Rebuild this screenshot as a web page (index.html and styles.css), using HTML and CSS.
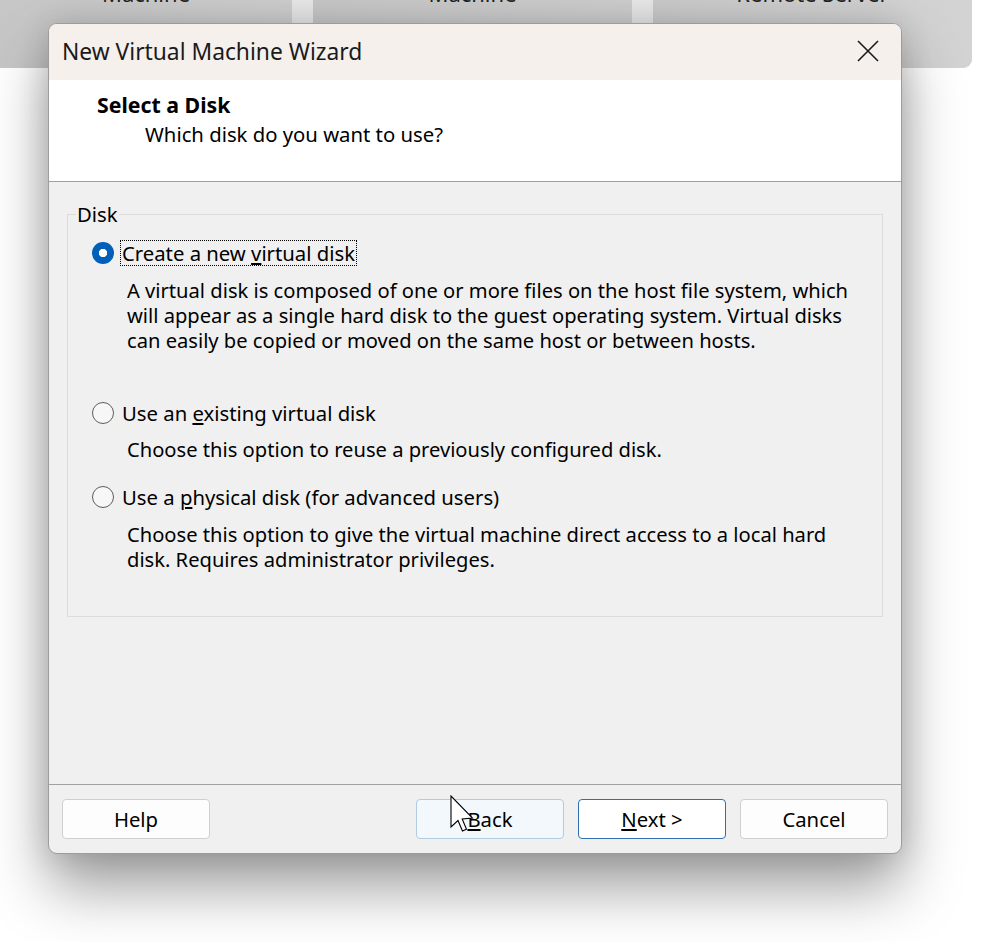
FILE: index.html
```html
<!DOCTYPE html>
<html>
<head>
<meta charset="utf-8">
<link rel="stylesheet" href="styles.css">
</head>
<body>
<div class="screen">
  <div class="cards">
    <div class="card card-a"><span class="card-label">Machine</span></div>
    <div class="card card-b"><span class="card-label">Machine</span></div>
    <div class="card card-c"><span class="card-label">Remote Server</span></div>
  </div>

  <div class="dialog">
    <div class="titlebar">
      <span class="title">New Virtual Machine Wizard</span>
      <svg class="close" width="22" height="22" viewBox="0 0 22 22"><path d="M1 1 L21 21 M21 1 L1 21" stroke="#1a1a1a" stroke-width="1.6" fill="none"/></svg>
    </div>
    <div class="header">
      <div class="h-title">Select a Disk</div>
      <div class="h-sub">Which disk do you want to use?</div>
    </div>
    <div class="body">
      <fieldset class="group">
        <legend class="legend">Disk</legend>
        <div class="option opt1">
          <div class="radio-row">
            <span class="radio checked"></span>
            <span class="label focus">Create a new <u>v</u>irtual disk</span>
          </div>
          <div class="desc">
            <div class="line">A virtual disk is composed of one or more files on the host file system, which</div>
            <div class="line">will appear as a single hard disk to the guest operating system. Virtual disks</div>
            <div class="line">can easily be copied or moved on the same host or between hosts.</div>
          </div>
        </div>
        <div class="option opt2">
          <div class="radio-row">
            <span class="radio"></span>
            <span class="label">Use an <u>e</u>xisting virtual disk</span>
          </div>
          <div class="desc d2">
            <div class="line">Choose this option to reuse a previously configured disk.</div>
          </div>
        </div>
        <div class="option opt3">
          <div class="radio-row">
            <span class="radio"></span>
            <span class="label">Use a <u>p</u>hysical disk (for advanced users)</span>
          </div>
          <div class="desc">
            <div class="line">Choose this option to give the virtual machine direct access to a local hard</div>
            <div class="line">disk. Requires administrator privileges.</div>
          </div>
        </div>
      </fieldset>
    </div>
    <div class="footer">
      <button class="btn">Help</button>
      <div class="spacer"></div>
      <div class="btn-group">
        <button class="btn hover"><u>B</u>ack</button>
        <button class="btn default"><u>N</u>ext &gt;</button>
        <button class="btn">Cancel</button>
      </div>
    </div>
  </div>

  <svg class="cursor" width="26" height="40" viewBox="0 0 26 40">
    <path d="M1 1 L1 32 L8 25.5 L12.5 36 L16.5 34.3 L12.2 24 L22.5 23 Z" fill="#ffffff" stroke="#000000" stroke-width="1.1" stroke-linejoin="miter"/>
  </svg>
</div>
</body>
</html>
```

FILE: styles.css
```css
* { box-sizing: border-box; }
html, body {
  margin: 0;
  padding: 0;
  background: #ffffff;
  overflow: hidden;
}
.screen {
  position: relative;
  width: 997px;
  height: 942px;
  overflow: hidden;
  font-family: "Noto Sans", "Open Sans", sans-serif;
  color: #000;
}
.cards {
  display: flex;
  width: 972px;
  height: 68px;
  gap: 21px;
  background: #e6e6e6;
  border-bottom-right-radius: 9px;
}
.card {
  height: 68px;
  background: linear-gradient(90deg, #c6c6c6, #cdcdcd);
  display: flex;
  justify-content: center;
  font-size: 22px;
  color: #222;
}
.card-a { width: 292px; }
.card-b { width: 319px; }
.card-c { width: 319px; border-bottom-right-radius: 9px; background: linear-gradient(90deg, #c9c9c9, #d3d3d3); }
.card-label {
  margin-top: -21px;
  line-height: 28px;
  height: 28px;
}

.dialog {
  position: absolute;
  left: 48px;
  top: 23px;
  width: 854px;
  height: 831px;
  border: 1px solid #9c9c9c;
  border-radius: 9px;
  background: #f0f0f0;
  overflow: hidden;
  box-shadow: 0 34px 60px rgba(0,0,0,0.38), 0 0 30px rgba(0,0,0,0.15);
  display: flex;
  flex-direction: column;
}
.titlebar {
  height: 56px;
  flex: none;
  background: #f6f0ed;
  display: flex;
  align-items: center;
  padding-left: 13px;
  padding-right: 22px;
}
.title {
  font-size: 22.8px;
  flex: 1;
  color: #1a1a1a;
  margin-top: -1px;
}
.close { margin-top: -2px; }
.header {
  height: 102px;
  flex: none;
  background: #ffffff;
  border-bottom: 1px solid #a0a0a0;
  padding-left: 48px;
  padding-top: 11px;
}
.h-title {
  font-weight: 700;
  font-size: 21.3px;
  line-height: 27px;
}
.h-sub {
  font-size: 20.3px;
  line-height: 27px;
  padding-left: 48px;
  margin-top: 3px;
}
.body {
  flex: 1;
  padding: 21px 18px 0 18px;
}
.group {
  margin: 0;
  border: 1px solid #dcdcdc;
  padding: 0 0 0 24px;
  height: 414px;
}
.legend {
  font-size: 20.3px;
  padding: 0 1px;
  margin-left: -16px;
  line-height: 22px;
}
.opt1 { margin-top: 15px; }
.opt2 { margin-top: 47px; }
.opt3 { margin-top: 22px; }
.radio-row {
  display: flex;
  align-items: center;
  gap: 7px;
  height: 26px;
}
.radio {
  width: 22px;
  height: 22px;
  border-radius: 50%;
  border: 1.3px solid #5d5d5d;
  background: #f7f7f7;
  flex: none;
}
.radio.checked {
  border: none;
  background: radial-gradient(circle, #ffffff 0 3.8px, #005fb8 4.5px);
}
.label {
  font-size: 20.3px;
  line-height: 24px;
  padding: 0 1px;
  white-space: nowrap;
}
.label.focus { outline: 1px dotted #000; outline-offset: 0; }
.desc {
  margin: 12px 0 0 35px;
  font-size: 20.15px;
}
.desc.d2 { margin-top: 11px; }
.line {
  height: 25px;
  line-height: 25px;
  white-space: nowrap;
}
.footer {
  height: 69px;
  flex: none;
  border-top: 1px solid #a0a0a0;
  display: flex;
  align-items: flex-start;
  padding: 14px 13px 0 13px;
}
.spacer { flex: 1; }
.btn-group {
  display: flex;
  gap: 14px;
}
.btn {
  width: 148px;
  height: 40px;
  border: 1px solid #cfcfcf;
  border-radius: 4px;
  background: #fdfdfd;
  font-family: "Noto Sans", "Open Sans", sans-serif;
  font-size: 20.3px;
  color: #000;
  padding: 0;
}
.btn.hover { background: #f3f8fc; border-color: #b3cbe0; }
.btn.default { border-color: #2f6fb0; background: #ffffff; }

.cursor {
  position: absolute;
  left: 450px;
  top: 795px;
}
```
